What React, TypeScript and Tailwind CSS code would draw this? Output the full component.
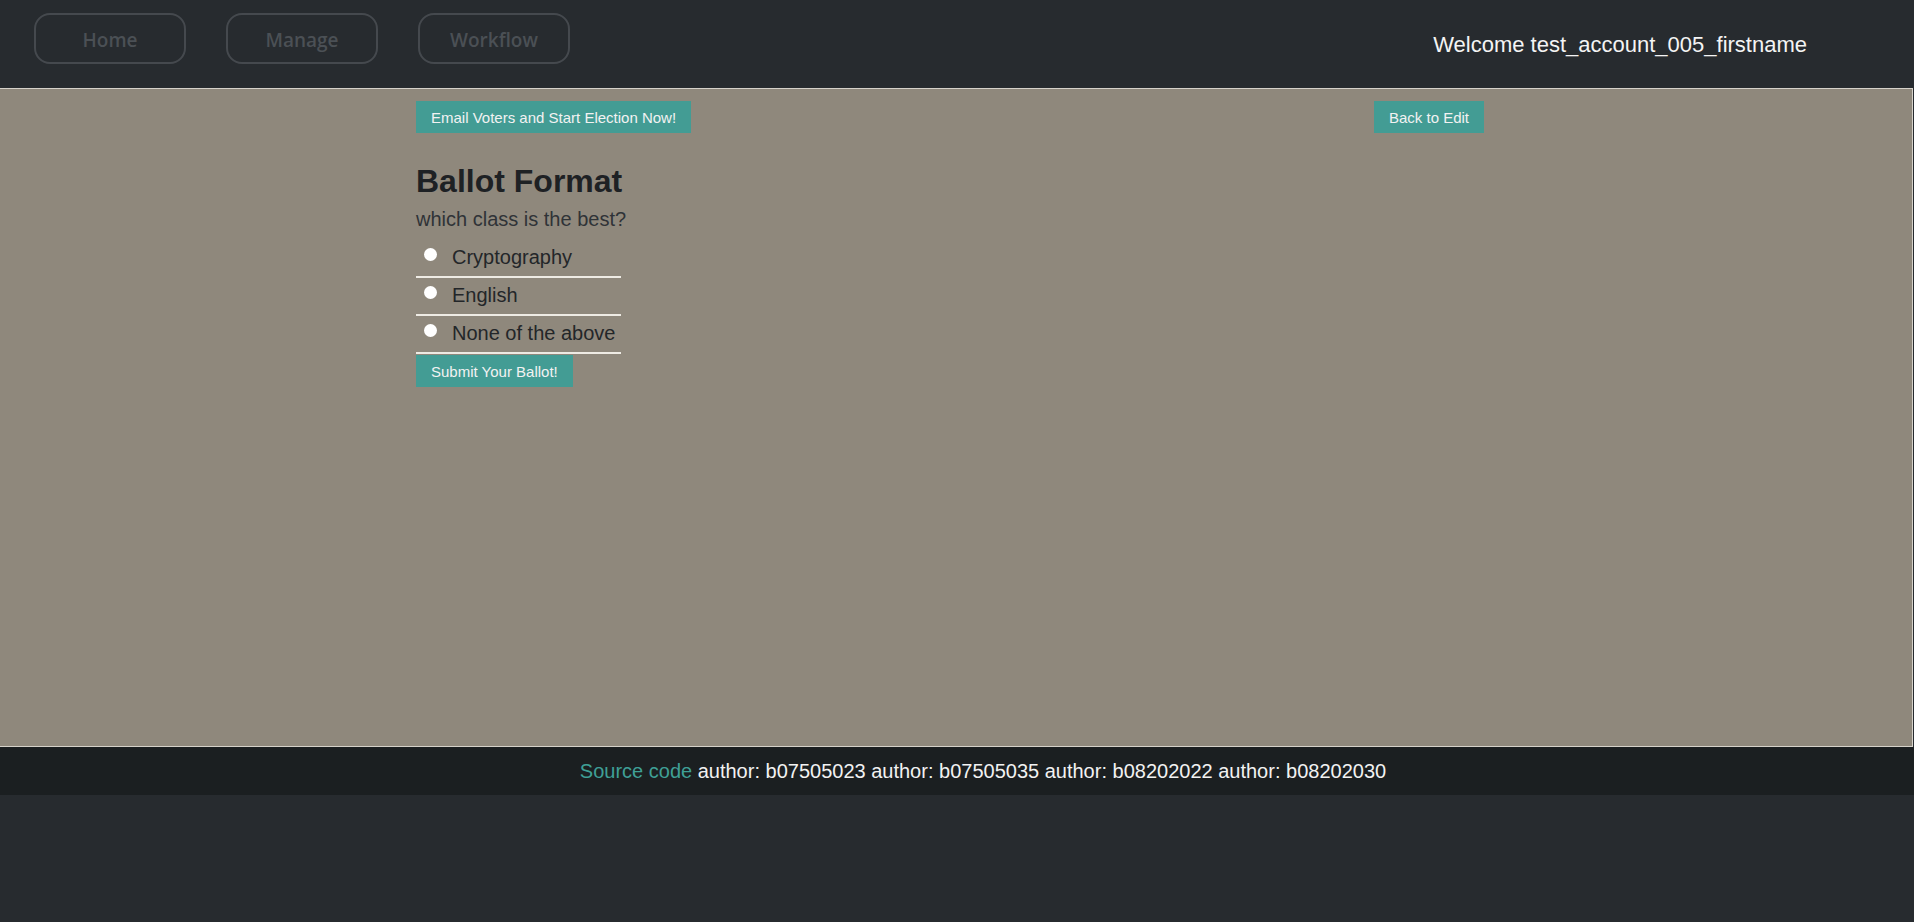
import React from 'react'

const navItems = ['Home', 'Manage', 'Workflow']
const options = ['Cryptography', 'English', 'None of the above']
const authors = ['b07505023', 'b07505035', 'b08202022', 'b08202030']

const TealButton = ({ children }: { children: React.ReactNode }) => (
  <button className="h-[32px] px-[15px] bg-[#439c94] text-[15px] text-[#f2f2f2] leading-none">
    {children}
  </button>
)

const App = () => {
  return (
    <div className="min-h-[922px] bg-[#272b2f] font-['Liberation_Sans',Arial,sans-serif]">
      <header className="h-[88px] flex items-start">
        <nav className="flex gap-[40px] pl-[34px] pt-[13px]">
          {navItems.map((item) => (
            <button
              key={item}
              className="w-[152px] h-[51px] pt-[3px] rounded-[16px] border-2 border-[#45494e] text-[19px] font-semibold text-[#4b5055] font-['Open_Sans',sans-serif]"
            >
              {item}
            </button>
          ))}
        </nav>
        <div className="ml-auto mr-[107px] h-[88px] flex items-center text-[22px] text-[#f4f4f4]">
          Welcome test_account_005_firstname
        </div>
      </header>

      <main className="h-[659px] w-[1913px] bg-[#8f887c] border-t border-r border-b border-[#d6d2ca]">
        <div className="ml-[416px] w-[1068px] pt-[12px]">
          <div className="flex justify-between">
            <TealButton>Email Voters and Start Election Now!</TealButton>
            <TealButton>Back to Edit</TealButton>
          </div>

          <h2 className="mt-[30px] text-[32px] leading-[37px] font-bold text-[#1e2124]">
            Ballot Format
          </h2>
          <p className="mt-[8px] text-[20px] leading-[23px] text-[#2f3337]">which class is the best?</p>

          <form className="mt-[9px] w-[205px]">
            {options.map((opt) => (
              <label
                key={opt}
                className="flex items-start h-[38px] pt-[6px] border-b-2 border-[#eeebe4]"
              >
                <input
                  type="radio"
                  name="ballot"
                  className="appearance-none mt-[2px] ml-[8px] mr-[15px] w-[13px] h-[13px] rounded-full bg-white shrink-0"
                />
                <span className="text-[20px] leading-[23px] text-[#232629]">{opt}</span>
              </label>
            ))}
            <div className="mt-[1px]">
              <TealButton>Submit Your Ballot!</TealButton>
            </div>
          </form>
        </div>
      </main>

      <footer className="h-[48px] pl-[52px] bg-[#1b1f21] flex items-center justify-center text-[20px] text-[#f2f2f2]">
        <a className="text-[#3f9f96]">Source code</a>
        {authors.map((a) => (
          <span key={a} className="whitespace-pre"> author: {a}</span>
        ))}
      </footer>
    </div>
  )
}

export default App
